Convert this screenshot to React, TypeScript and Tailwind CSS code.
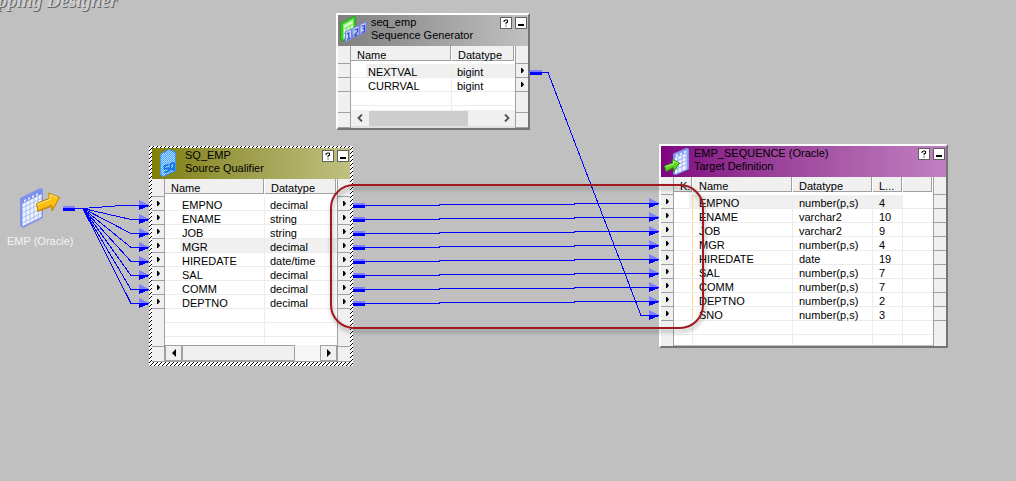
import type { ReactNode } from "react";

type Column = { label: string; width: string; pad: string };
type Row = { cells: string[]; selected?: boolean };

const SOURCE_ROWS: Row[] = [
  { cells: ["EMPNO", "decimal"] },
  { cells: ["ENAME", "string"] },
  { cells: ["JOB", "string"] },
  { cells: ["MGR", "decimal"], selected: true },
  { cells: ["HIREDATE", "date/time"] },
  { cells: ["SAL", "decimal"] },
  { cells: ["COMM", "decimal"] },
  { cells: ["DEPTNO", "decimal"] },
];

const SEQUENCE_ROWS: Row[] = [
  { cells: ["NEXTVAL", "bigint"], selected: true },
  { cells: ["CURRVAL", "bigint"] },
];

const TARGET_ROWS: Row[] = [
  { cells: ["", "EMPNO", "number(p,s)", "4", ""], selected: true },
  { cells: ["", "ENAME", "varchar2", "10", ""] },
  { cells: ["", "JOB", "varchar2", "9", ""] },
  { cells: ["", "MGR", "number(p,s)", "4", ""] },
  { cells: ["", "HIREDATE", "date", "19", ""] },
  { cells: ["", "SAL", "number(p,s)", "7", ""] },
  { cells: ["", "COMM", "number(p,s)", "7", ""] },
  { cells: ["", "DEPTNO", "number(p,s)", "2", ""] },
  { cells: ["", "SNO", "number(p,s)", "3", ""] },
];

function Gutter({ side, rows, ports, foot }: { side: "left" | "right"; rows: number; ports: boolean; foot: boolean }) {
  const edge = side === "left" ? "border-r" : "border-l";
  return (
    <div className={`flex w-[13px] shrink-0 flex-col border-[#a0a0a0] bg-[#f0f0f0] ${edge}`}>
      <div className="h-[18px] border-b border-[#a0a0a0]" />
      {Array.from({ length: rows }, (_, i) => (
        <div key={i} className="flex h-[14px] items-center justify-center border-b border-[#a0a0a0]">
          {ports && (
            <svg width="3" height="5" viewBox="0 0 3 5" aria-hidden="true">
              <path d="M0 0H1L3 2.5L1 5H0Z" fill="#000" />
            </svg>
          )}
        </div>
      ))}
      <div className="flex-1" />
      {foot && <div className="h-[16px] border-y border-[#a0a0a0]" />}
    </div>
  );
}

function PortTable({ label, columns, rows, fillers, keyed }: { label: string; columns: Column[]; rows: Row[]; fillers: string[]; keyed?: boolean }) {
  return (
    <table aria-label={label} className="w-full table-fixed border-separate border-spacing-0">
      <thead>
        <tr>
          {columns.map((c, i) => (
            <th key={i} className={`h-[18px] p-0 text-left align-top font-normal ${c.width}`}>
              <div className="mr-px h-[15px] border-r border-b border-[#a0a0a0] bg-[#f0f0f0] pl-[6px] leading-[18px] whitespace-nowrap">
                {c.label}
              </div>
            </th>
          ))}
        </tr>
      </thead>
      <tbody>
        {rows.map((row, r) => (
          <tr key={r}>
            {row.cells.map((cell, i) => {
              const last = i === row.cells.length - 1;
              const shade = row.selected && !(keyed && last) ? "bg-[#f0f0f0]" : "";
              return (
                <td key={i} className={`h-[14px] border-b border-[#ececec] p-0 ${last || (keyed && i === 0) ? "" : "border-r"} ${i === 0 ? "pl-[15px]" : ""}`}>
                  <div className={`h-[13px] leading-[16px] whitespace-nowrap ${shade} ${columns[i].pad}`}>
                    {keyed && i === 0 ? <div className="ml-auto h-[12px] w-px bg-[#fcd48c]" /> : cell}
                  </div>
                </td>
              );
            })}
          </tr>
        ))}
        {fillers.map((h, r) => (
          <tr key={`f${r}`} aria-hidden="true">
            {columns.map((_, i) => (
              <td key={i} className={`p-0 ${h} border-[#ececec] ${r < fillers.length - 1 ? "border-b" : ""} ${i < columns.length - 1 ? "border-r" : ""}`} />
            ))}
          </tr>
        ))}
      </tbody>
    </table>
  );
}

function TitleBar({ icon, name, kind, tone }: { icon: ReactNode; name: string; kind: string; tone: string }) {
  const button = "flex size-[12px] items-center justify-center border border-[#606060] bg-white";
  return (
    <header className={`flex h-[31px] items-start pr-px ${tone}`}>
      <div className="h-full w-[33px] shrink-0">{icon}</div>
      <div className="min-w-0 flex-1 pt-px leading-[13px] whitespace-nowrap">
        <h2>{name}</h2>
        <p>{kind}</p>
      </div>
      <div className="flex gap-[3px] pt-[2px]">
        <button type="button" aria-label="Help" className={button}>
          <svg width="6" height="8" viewBox="0 0 6 8" fill="none" stroke="#000" aria-hidden="true">
            <path d="M1 3V1.5H2M2 1H4.5V3.5H3V5.3M3 6.5V7.5" />
          </svg>
        </button>
        <button type="button" aria-label="Minimize" className={button}>
          <span className="mt-[4px] h-[2px] w-[6px] bg-black" />
        </button>
      </div>
    </header>
  );
}

function SequenceIcon() {
  return (
    <svg width="32" height="30" viewBox="0 0 32 30" aria-hidden="true">
      <path d="M2.500 8L6 6.500L15 1.500L17.500 2V19L6 26L2.500 25Z" fill="#3cc82d" stroke="#28a51c" />
      <path d="M5 9.500L15.500 3.500V18L5 24.500Z" fill="#8bea74" />
      <path d="M6 10.500L15 5.500V8L6 13Z" fill="#d8fccd" />
      <path d="M6 15l2-1v2.500l-2 1zM9.500 13l2-1v2.500l-2 1zM13 11l2-1v2.500l-2 1zM6 19.500l2-1v2.500l-2 1zM9.500 17.500l2-1v2.500l-2 1z" fill="#e1ffd9" />
      <g stroke="#7180ec" fill="#c3cdfe">
        <path d="M7.500 16.500l6-2.500v10l-6 2.500z" />
        <path d="M15 13l6-2.500v10l-6 2.500z" />
        <path d="M22 9.500l6-2.500v10l-6 2.500z" />
      </g>
      <path d="M9 19l1.800-1v6M9 24.500l3.500-1.500M16.500 15l3-1v2.500l-2.500 3v1.500l3-1.200M23.500 11.500l3-1v2.500l-2 1l2-.500v3l-3 1" fill="none" stroke="#3448c4" strokeWidth="1.200" />
    </svg>
  );
}

function QualifierIcon() {
  return (
    <svg width="30" height="31" viewBox="0 0 30 31" aria-hidden="true">
      <defs>
        <pattern id="weave" width="2" height="2" patternUnits="userSpaceOnUse">
          <rect width="2" height="2" fill="#48a2ff" />
          <path d="M0 0h1v1H0zM1 1h1v1H1z" fill="#b4dcff" />
        </pattern>
      </defs>
      <path d="M8 6L17 1L24 4V23L11 29L8 27Z" fill="#3b94ff" />
      <path d="M9 7L17 2L23 5V22L11 28L9 26Z" fill="url(#weave)" shapeRendering="crispEdges" />
      <path d="M16.500 16.500l-4 1.500v3l4-1v3l-4 1.500M22 14.500l-3.500 1.500v5.500l3.500-1v-6M20.500 19.500l2 3" fill="none" stroke="#1173dc" strokeWidth="1.700" />
    </svg>
  );
}

function TargetIcon() {
  return (
    <svg width="30" height="30" viewBox="0 0 30 30" aria-hidden="true">
      <path d="M12.500 8L25 2.500L27.500 3V23L15 28.500L12.500 28Z" fill="#8495ee" stroke="#7c90ee" />
      <path d="M14 9L26 4V23L14 28Z" fill="#edf3ff" />
      <path d="M14 8L27 3V7L14 12Z" fill="#93a8f2" />
      <path d="M15 9l2-1v2l-2 1zM19 7.500l2-1v2l-2 1zM23 5.500l2-1v2l-2 1z" fill="#e9efff" />
      <path d="M13 16L27 10M13 20L27 14M13 24L27 18M17 11V27M21 9V25M25 7V23" stroke="#9fb0f3" fill="none" />
      <path d="M3.500 20L11.500 17V13.500L18.500 17L12.500 26V21.500L5 25.500Z" fill="#5ed321" stroke="#258c13" />
      <path d="M4.500 20.500L12.500 18V15L17 17" fill="none" stroke="#b9f879" />
    </svg>
  );
}

function SourceIcon() {
  return (
    <svg width="42" height="42" viewBox="0 0 42 42" aria-hidden="true">
      <path d="M2 12L22 2L25 3V32L5 42L2 40Z" fill="#8494ee" />
      <path d="M4 13L24 3V31L4 41Z" fill="#eef5ff" stroke="#7d8ee8" />
      <path d="M4 13L24 3V8L4 18Z" fill="#7d90e9" />
      <path d="M6 14l2-1v2l-2 1zM10 12l2-1v2l-2 1zM14 10l2-1v2l-2 1zM18 8l2-1v2l-2 1z" fill="#eaf0ff" />
      <path d="M4 22L24 12M4 27L24 17M4 32L24 22M4 37L24 27M8 16V39M12 14V37M16 12V35M20 10V33" stroke="#aebdf4" fill="none" />
      <path d="M18.500 17.500L31 12.500V7L41.500 11.500L34 25V20L20 25.500Z" fill="#fac014" stroke="#bd7b00" />
      <path d="M19 18.500L32 13.500V8.500L39 11.500" fill="none" stroke="#ffe980" />
      <path d="M20 24.500L34 19V23" fill="none" stroke="#df9300" />
    </svg>
  );
}

function Head({ x, y }: { x: number; y: number }) {
  return (
    <>
      <path d={`M${x} ${y - 5}L${x + 10} ${y}H${x}Z`} fill="#8080ff" />
      <path d={`M${x} ${y}H${x + 10}V${y + 1}L${x} ${y + 5}Z`} fill="#0000ff" />
    </>
  );
}

function Stub({ x, y }: { x: number; y: number }) {
  return (
    <>
      <rect x={x} y={y} width="12" height="2" fill="#8080ff" />
      <rect x={x} y={y + 2} width="12" height="3" fill="#0000ff" />
    </>
  );
}

function Links() {
  const ports = SOURCE_ROWS.map((_, i) => i * 14);
  return (
    <svg width="1016" height="481" className="pointer-events-none absolute top-0 left-0" shapeRendering="crispEdges" fill="none" aria-hidden="true">
      <Stub x={63} y={206} />
      <path d="M75 208.500H83" stroke="#0000ff" />
      {ports.map((d) => (
        <g key={d}>
          <path d={d === 0 ? "M82 208.500L122 205.500H139" : `M83 208.500L131 ${205.5 + d}H139`} stroke="#0000ff" />
          <Head x={139} y={205 + d} />
          <Stub x={353} y={203 + d} />
          <path d={`M365 ${205.5 + d}H439V${204.5 + d}H574V${203.5 + d}H650`} stroke="#0000ff" />
          <Head x={649} y={203 + d} />
        </g>
      ))}
      <Stub x={530} y={70} />
      <path d="M542 72.500H548L641 315.500H650" stroke="#0000ff" />
      <Head x={649} y={315} />
    </svg>
  );
}

function Chevron({ d }: { d: string }) {
  return (
    <svg width="6" height="8" viewBox="0 0 6 8" fill="none" stroke="#505050" strokeWidth="1.800" aria-hidden="true">
      <path d={d} />
    </svg>
  );
}

export default function App() {
  const raised = "border-2 border-t-white border-l-white border-r-[#747474] border-b-[#747474]";
  return (
    <main className="relative min-h-screen overflow-hidden bg-[#c0c0c0] font-['Liberation_Sans',Arial,sans-serif] text-[11px] text-black">
      <h1 className="absolute -top-[10px] -left-[29px] font-['Liberation_Serif',serif] text-[19px] leading-[22px] font-bold whitespace-nowrap text-[#d0d0d0] italic [text-shadow:1px_1px_0_#606468]">
        Mapping Designer
      </h1>

      <figure className="absolute top-[186px] left-[7px] flex flex-col text-[#f4f4f4]">
        <div className="pl-[11px]">
          <SourceIcon />
        </div>
        <figcaption className="pt-[6px] leading-[14px] whitespace-nowrap">EMP (Oracle)</figcaption>
      </figure>

      <section className={`absolute top-[13px] left-[336px] w-[194px] ${raised}`}>
        <TitleBar icon={<SequenceIcon />} name="seq_emp" kind="Sequence Generator" tone="bg-linear-to-r from-[#808080] to-[#c0c0c0]" />
        <div className="flex bg-white">
          <Gutter side="left" rows={2} ports={false} foot />
          <div className="min-w-0 flex-1">
            <PortTable
              label="seq_emp ports"
              rows={SEQUENCE_ROWS}
              fillers={["h-[14px]", "h-[4px]"]}
              columns={[
                { label: "Name", width: "w-[101px]", pad: "pl-[2px]" },
                { label: "Datatype", width: "", pad: "pl-[5px]" },
              ]}
            />
            <div className="flex h-[18px] items-stretch border-b-2 border-[#e0e0e0] bg-[#f0f0f0]">
              <button type="button" aria-label="Scroll left" className="flex w-[18px] items-center justify-center">
                <Chevron d="M5 0.500L1.500 4L5 7.500" />
              </button>
              <div className="flex-1">
                <div className="h-full w-[99px] border-t border-[#f0f0f0] bg-[#cdcdcd]" />
              </div>
              <button type="button" aria-label="Scroll right" className="flex w-[17px] items-center justify-center">
                <Chevron d="M1 0.500L4.500 4L1 7.500" />
              </button>
            </div>
          </div>
          <Gutter side="right" rows={2} ports foot />
        </div>
      </section>

      <section className="absolute top-[146px] left-[149px] w-[204px] bg-[repeating-linear-gradient(135deg,#000_0_1px,#fff_1px_2.83px)] px-[3px] pt-[2px] pb-[4px]">
        <TitleBar icon={<QualifierIcon />} name="SQ_EMP" kind="Source Qualifier" tone="bg-linear-to-r from-[#808000] to-[#c0c080]" />
        <div className="flex bg-white">
          <Gutter side="left" rows={8} ports foot />
          <div className="min-w-0 flex-1">
            <PortTable
              label="SQ_EMP ports"
              rows={SOURCE_ROWS}
              fillers={["h-[14px]", "h-[14px]", "h-[8px]"]}
              columns={[
                { label: "Name", width: "w-[100px]", pad: "pl-[2px]" },
                { label: "Datatype", width: "", pad: "pl-[5px]" },
              ]}
            />
            <div className="flex h-[17px] items-stretch border-b border-[#a0a0a0] bg-[#f6f6f6]">
              <button type="button" aria-label="Scroll left" className="flex w-[17px] items-center justify-center border border-[#a0a0a0] bg-[#f0f0f0]">
                <svg width="4" height="8" viewBox="0 0 4 8" aria-hidden="true">
                  <path d="M4 0V8L0 4Z" />
                </svg>
              </button>
              <div className="flex-1">
                <div className="h-full w-[113px] border border-[#a0a0a0] bg-[#f0f0f0]" />
              </div>
              <button type="button" aria-label="Scroll right" className="flex w-[17px] items-center justify-center border border-[#a0a0a0] bg-[#f0f0f0]">
                <svg width="4" height="8" viewBox="0 0 4 8" aria-hidden="true">
                  <path d="M0 0V8L4 4Z" />
                </svg>
              </button>
            </div>
          </div>
          <Gutter side="right" rows={8} ports foot />
        </div>
      </section>

      <section className={`absolute top-[144px] left-[659px] w-[289px] ${raised}`}>
        <TitleBar icon={<TargetIcon />} name="EMP_SEQUENCE (Oracle)" kind="Target Definition" tone="bg-linear-to-r from-[#800080] to-[#c080c0]" />
        <div className="flex bg-white">
          <Gutter side="left" rows={9} ports foot={false} />
          <div className="min-w-0 flex-1 border-b border-[#c0c0c0]">
            <PortTable
              label="EMP_SEQUENCE columns"
              keyed
              rows={TARGET_ROWS}
              fillers={["h-[14px]", "h-[10px]"]}
              columns={[
                { label: "K.", width: "w-[19px]", pad: "" },
                { label: "Name", width: "w-[100px]", pad: "pl-[6px]" },
                { label: "Datatype", width: "w-[80px]", pad: "pl-[6px]" },
                { label: "L...", width: "w-[30px]", pad: "pl-[6px]" },
                { label: "", width: "", pad: "" },
              ]}
            />
          </div>
          <Gutter side="right" rows={9} ports={false} foot={false} />
        </div>
      </section>

      <Links />
      <div className="pointer-events-none absolute top-[184px] left-[330px] h-[145px] w-[374px] rounded-[24px] border-2 border-[#a01820] drop-shadow-[1px_3px_2px_rgba(0,0,0,0.35)]" />
    </main>
  );
}
